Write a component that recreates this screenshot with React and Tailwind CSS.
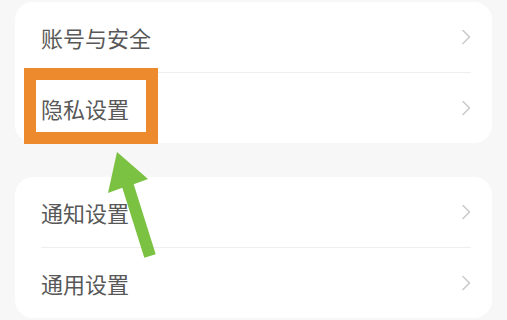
import React from "react";

const font = { fontFamily: '"Noto Sans CJK SC", "Noto Sans", sans-serif' };

function Chevron() {
  return (
    <svg width="11" height="16" viewBox="0 0 11 16" className="shrink-0">
      <path d="M2 1.5 L8.5 8 L2 14.5" fill="none" stroke="#cbcbcb" strokeWidth="1.6" strokeLinecap="round" strokeLinejoin="round" />
    </svg>
  );
}

function Row({ label, last }) {
  return (
    <div className="flex flex-col">
      <div className="flex items-center justify-between h-[70px] pl-[26px] pr-[20px]">
        <span className="text-[22px] leading-none text-[#585858]" style={font}>{label}</span>
        <Chevron />
      </div>
      {!last && <div className="h-px bg-[#eeeeee] ml-[26px] mr-[21px]" />}
    </div>
  );
}

export default function App() {
  return (
    <div className="relative w-[507px] h-[320px] overflow-hidden bg-[#f7f7f7] pt-[2px] px-[15px]">
      <div className="flex flex-col gap-[34px]">
        <div className="bg-white rounded-[18px]">
          <Row label="账号与安全" />
          <Row label="隐私设置" last />
        </div>
        <div className="bg-white rounded-[18px]">
          <Row label="通知设置" />
          <Row label="通用设置" last />
        </div>
      </div>

      {/* 标注框 */}
      <div className="absolute left-[24px] top-[68px] w-[134px] h-[76px] border-[12px] border-[#ee8a2e]" />

      {/* 箭头 */}
      <svg className="absolute left-0 top-0" width="507" height="320" viewBox="0 0 507 320">
        <polygon
          points="117,152 148,179 133.7,184.2 155.7,254.2 144.3,257.8 122.3,187.8 108,193"
          fill="#7cc242"
        />
      </svg>
    </div>
  );
}
